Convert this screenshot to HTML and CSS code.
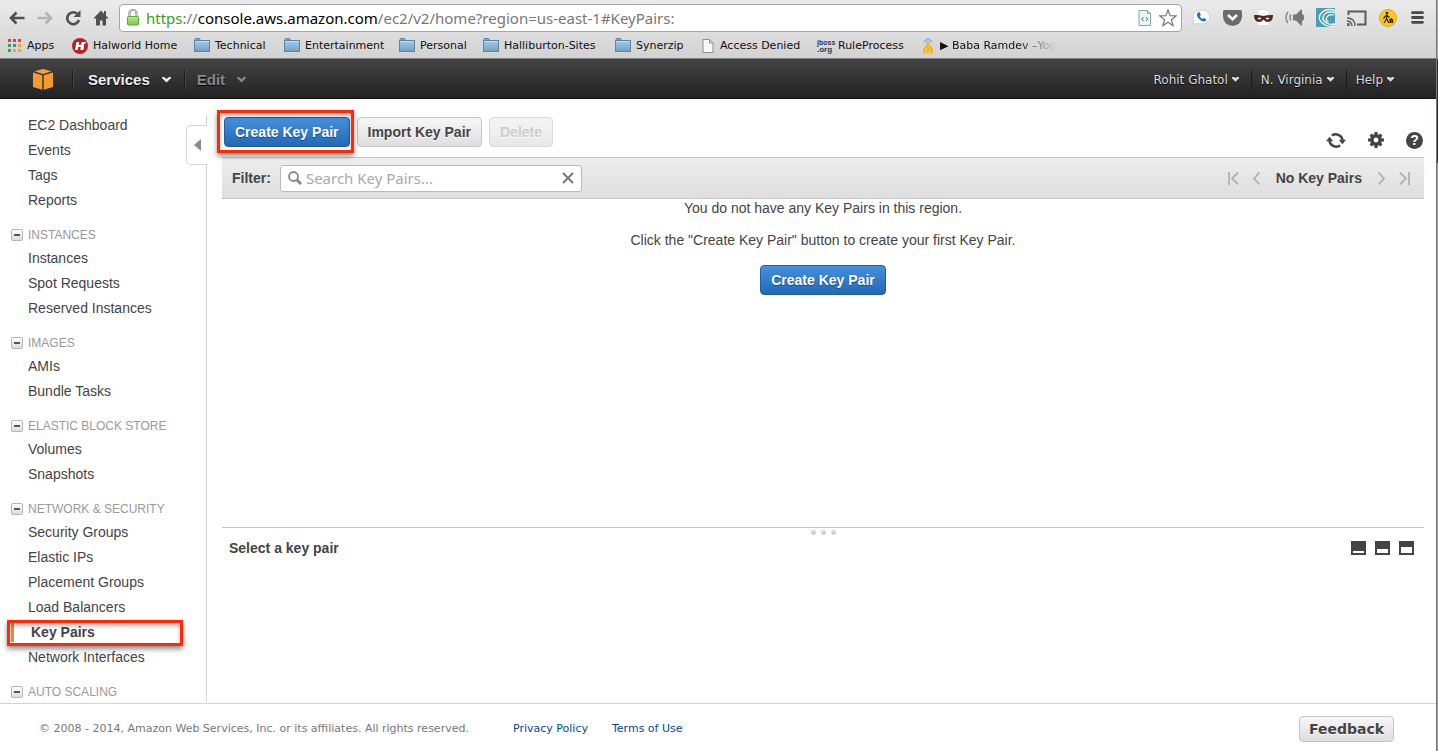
FILE: index.html
```html
<!DOCTYPE html>
<html lang="en">
<head>
<meta charset="utf-8">
<title>EC2 Management Console</title>
<link rel="stylesheet" href="styles.css">
</head>
<body>
<svg class="defs" aria-hidden="true">
  <defs>
    <linearGradient id="g-folder" x1="0" y1="0" x2="0" y2="1"><stop offset="0" stop-color="#a9cbe4"/><stop offset="1" stop-color="#6f9fc6"/></linearGradient>
    <linearGradient id="g-lock" x1="0" y1="0" x2="0" y2="1"><stop offset="0" stop-color="#b5ea8b"/><stop offset="1" stop-color="#7cc749"/></linearGradient>
    <symbol id="folder" viewBox="0 0 16 15"><path d="M1 2.500v-1q0-1 1-1h3q1 0 1 1v1" fill="#7fa8c9" stroke="#5b84a6"/><rect x=".5" y="2.500" width="15" height="11" fill="url(#g-folder)" stroke="#5b84a6"/><path d="M1 3.500h14" stroke="#c5dced"/></symbol>
    <symbol id="caret" viewBox="0 0 9 6"><path d="M0 0h2l2.500 2L7 0h2v1L4.500 5.500 0 1z" fill="currentColor"/></symbol>
    <symbol id="caret-s" viewBox="0 0 7 5"><path d="M0 0h2l1.500 1L5 0h2v1.200L3.500 4.800 0 1.200z" fill="currentColor"/></symbol>
  </defs>
</svg>
<div class="desktop">
<div class="window">
  <header class="chrome">
    <div class="toolbar">
      <div class="history">
        <button class="tool" aria-label="Back"><svg width="16" height="14" viewBox="0 0 16 14"><path d="M7.500 1.500L2 7l5.500 5.500M2 7h13.500" fill="none" stroke="#505050" stroke-width="2.600"/></svg></button>
        <button class="tool" aria-label="Forward"><svg width="16" height="14" viewBox="0 0 16 14"><path d="M8.500 1.500L14 7l-5.500 5.500M14 7H.5" fill="none" stroke="#b3b3b3" stroke-width="2.600"/></svg></button>
        <button class="tool" aria-label="Reload"><svg width="16" height="16" viewBox="0 0 16 16"><path d="M13 4.500A6 6 0 1 0 14 10" fill="none" stroke="#505050" stroke-width="2.600"/><path d="M15.500 0v7H8.500z" fill="#505050"/></svg></button>
        <button class="tool" aria-label="Home"><svg width="16" height="16" viewBox="0 0 16 16"><path d="M8 .5L.8 8l1 1L3 8v7.500h4V10.500h2.500v5H13V8l1.200 1 1-1L13 5.800V1h-2v2.700z" fill="#505050"/></svg></button>
      </div>
      <div class="address">
        <svg width="12" height="17" viewBox="0 0 12 17"><path d="M2.500 9V4.500a3.500 3.500 0 0 1 7 0V9" fill="none" stroke="#8b8b8b" stroke-width="2.200"/><path d="M2.500 9V4.500a3.500 3.500 0 0 1 7 0V9" fill="none" stroke="#ddd" stroke-width=".8"/><rect x=".5" y="7.500" width="11" height="8.500" rx="1" fill="url(#g-lock)" stroke="#5da534"/></svg>
        <div class="url"><span class="scheme">https</span>://<span class="host">console.aws.amazon.com</span>/ec2/v2/home?region=us-east-1#KeyPairs:</div>
        <svg width="14" height="16" viewBox="0 0 14 16"><path d="M1 .5h8.500L12.500 3.500v12H1z" fill="#eef5f6" stroke="#8aa5ab"/><path d="M9.500.5v3h3" fill="none" stroke="#8aa5ab"/><path d="M5.500 7L3.800 9l1.700 2M8 7l1.700 2L8 11" fill="none" stroke="#4f6b72"/></svg>
        <button class="tool" aria-label="Bookmark this page"><svg width="18" height="18" viewBox="0 0 18 18"><path d="M9 1l2.200 5.600 6 .3-4.700 3.800 1.600 5.900L9 13.300l-5.100 3.300 1.600-5.900L.8 6.900l6-.3z" fill="#fff" stroke="#777" stroke-width="1.200"/></svg></button>
      </div>
      <div class="extensions">
        <button class="tool" aria-label="Phone"><svg width="19" height="18" viewBox="0 0 19 18"><path d="M9.500 1c5 0 8.500 3 8.500 7s-3.500 7-8.500 7c-1.500 0-2.600-.2-3.600-.6L1 15.500l1-4C1 10.500 1 9 1 8c0-4 3.500-7 8.500-7z" fill="#fff" stroke="#ccc"/><path d="M6 3.500c-2 1.500-1 4.500 1.500 6.800s5.500 3 6.500 1.200l.3-1-2.600-1.600-1.400 1.200Q8 8.700 7.600 7l1.300-1L7.500 3z" fill="#1a6fe0"/></svg></button>
        <button class="tool" aria-label="Pocket"><svg width="19" height="16" viewBox="0 0 19 16"><path d="M1.500 0h16Q19 0 19 1.500V6.500a9.500 9.500 0 0 1-19 0v-5Q0 0 1.500 0z" fill="#6b6b6b"/><path d="M5 5l4.500 4.300L14 5" fill="none" stroke="#fff" stroke-width="2.600"/></svg></button>
        <button class="tool" aria-label="Mask"><svg width="19" height="17" viewBox="0 0 19 17"><path d="M3.500.5h8.500l3 3v13H3.500z" fill="#fff" stroke="#ddd"/><path d="M0 6q4.500-.5 9.500 1Q14.500 5.500 19 6q0 7-5 7-3 0-4.500-2.500Q8 13 5 13 0 13 0 6z" fill="#582524"/><path d="M3.500 9.500q2-2 4 0-2 2-4 0zM11.500 9.500q2-2 4 0-2 2-4 0z" fill="#fff"/></svg></button>
        <button class="tool" aria-label="Sound"><svg width="19" height="17" viewBox="0 0 19 17"><path d="M8 5.500h3l5-5h1V5q2 0 2 3.500T17 12v4.500h-1l-5-5H8z" fill="#777"/><path d="M6 5.500q-2 3 0 6M2.800 3q-3.600 5.500 0 11" fill="none" stroke="#888" stroke-width="1.500"/></svg></button>
        <button class="tool" aria-label="Swirl"><svg width="19" height="19" viewBox="0 0 19 19"><path d="M0 0h19v19H0z" fill="#4a9fb0"/><path d="M19 2.500Q10-.5 5 5.500T9 17q4 2 10 1M19 4.500Q11 2.500 8 7t2.500 8q3 2 8.500 1M18 7q-5-1.500-7 2t1.500 5" fill="none" stroke="#fff" stroke-width="1.300"/></svg></button>
        <button class="tool" aria-label="Cast"><svg width="20" height="16" viewBox="0 0 20 16"><path d="M1.500 5V1.500h17v13H10" fill="none" stroke="#5b5b5b" stroke-width="2"/><path d="M0 14h2v2H0zM0 11q4.500 0 5 5M0 8q8 0 8 8" fill="none" stroke="#5b5b5b" stroke-width="1.400"/></svg></button>
        <button class="tool" aria-label="Walker"><svg width="18" height="18" viewBox="0 0 18 18"><circle cx="9" cy="9" r="8.500" fill="#fbc71b" stroke="#e3a70f"/><circle cx="8" cy="4" r="1.300" fill="#332a12"/><path d="M8 5.500L7.500 10 5 14M7.700 9.500l2 4.500M4.500 9.500L7.500 6l3 2.500M12 9v5M11 14v-3.500h2.500V14" fill="none" stroke="#332a12" stroke-width="1.200"/></svg></button>
        <button class="tool more" aria-label="Menu"><svg width="13" height="13" viewBox="0 0 13 13"><path d="M1.500 1.700h10M1.500 6.500h10M1.500 11.300h10" stroke="#484848" stroke-width="2.800" stroke-linecap="round"/></svg></button>
      </div>
    </div>
    <nav class="bookmarks" aria-label="Bookmarks">
      <a href="#apps"><svg width="15" height="14" viewBox="0 0 15 14"><path d="M1 0h3v3H1zM6 0h3v3H6zM11 0h3v3h-3z" fill="#dd4336"/><path d="M1 5h3v3H1zM1 10h3v3H1z" fill="#3f9c50"/><path d="M6 5h3v3H6z" fill="#3c7ee8"/><path d="M11 5h3v3h-3zM6 10h3v3H6zM11 10h3v3h-3z" fill="#f0a92e"/></svg><span>Apps</span></a>
      <a href="#halworld"><svg width="16" height="16" viewBox="0 0 16 16"><circle cx="8" cy="8" r="8" fill="#b02526"/><path d="M4.500 4H7.200L6.700 6.700H9.300L9.800 4h4.200l-.3 1.500h-1.500L11.500 12H8.300l.5-3H6.200l-.5 3H3z" fill="#fff"/></svg><span>Halworld Home</span></a>
      <a href="#technical"><svg width="16" height="15"><use href="#folder"/></svg><span>Technical</span></a>
      <a href="#entertainment"><svg width="16" height="15"><use href="#folder"/></svg><span>Entertainment</span></a>
      <a href="#personal"><svg width="16" height="15"><use href="#folder"/></svg><span>Personal</span></a>
      <a href="#sites"><svg width="16" height="15"><use href="#folder"/></svg><span>Halliburton-Sites</span></a>
      <a href="#synerzip"><svg width="16" height="15"><use href="#folder"/></svg><span>Synerzip</span></a>
      <a href="#denied"><svg width="13" height="14" viewBox="0 0 13 14"><path d="M1 .5h6.500L11 4v9.500H1z" fill="#fafafa" stroke="#8d8d8d"/><path d="M7.500.5V4H11" fill="none" stroke="#8d8d8d"/></svg><span>Access Denied</span></a>
      <a href="#rule"><span class="jboss"><b>jboss</b><b>.org</b></span><span>RuleProcess</span></a>
      <a href="#baba" class="faded"><svg width="14" height="16" viewBox="0 0 14 16"><path d="M7 4l2.500 3.500L12 11v4.500H2V11l2.500-3.500z" fill="#efb62a"/><path d="M5 15v-4.500M8.500 15V8" stroke="#fbdc66"/><path d="M2.500 4L7 .5 11.500 4M4.500 5L7 3l2.500 2" fill="none" stroke="#5aa5dc"/></svg><span>▶ Baba Ramdev –Yog</span></a>
    </nav>
  </header>

  <nav class="console-nav" aria-label="Console">
    <a href="#home" class="logo" aria-label="AWS home"><svg width="20" height="21" viewBox="0 0 20 21"><path d="M10 0l8.500 2.300L10 5 1.500 2.300z" fill="#f6a136"/><path d="M0 3.500l9.300 2.800v14.500L0 18zM20 3.500l-9.300 2.800v14.500L20 18z" fill="#f39b2d"/></svg></a>
    <button class="menu">Services<svg width="9" height="6"><use href="#caret"/></svg></button>
    <button class="menu dim">Edit<svg width="9" height="6"><use href="#caret"/></svg></button>
    <div class="account">
      <button class="menu-s">Rohit Ghatol<svg width="7" height="5"><use href="#caret-s"/></svg></button>
      <button class="menu-s">N. Virginia<svg width="7" height="5"><use href="#caret-s"/></svg></button>
      <button class="menu-s">Help<svg width="7" height="5"><use href="#caret-s"/></svg></button>
    </div>
  </nav>

  <div class="workspace">
    <aside class="sidebar">
      <ul>
        <li><a href="#dash">EC2 Dashboard</a></li>
        <li><a href="#events">Events</a></li>
        <li><a href="#tags">Tags</a></li>
        <li><a href="#reports">Reports</a></li>
      </ul>
      <h2><button aria-label="Collapse Instances"></button>INSTANCES</h2>
      <ul>
        <li><a href="#instances">Instances</a></li>
        <li><a href="#spot">Spot Requests</a></li>
        <li><a href="#reserved">Reserved Instances</a></li>
      </ul>
      <h2><button aria-label="Collapse Images"></button>IMAGES</h2>
      <ul>
        <li><a href="#amis">AMIs</a></li>
        <li><a href="#bundle">Bundle Tasks</a></li>
      </ul>
      <h2><button aria-label="Collapse Elastic Block Store"></button>ELASTIC BLOCK STORE</h2>
      <ul>
        <li><a href="#volumes">Volumes</a></li>
        <li><a href="#snapshots">Snapshots</a></li>
      </ul>
      <h2><button aria-label="Collapse Network and Security"></button>NETWORK &amp; SECURITY</h2>
      <ul>
        <li><a href="#groups">Security Groups</a></li>
        <li><a href="#ips">Elastic IPs</a></li>
        <li><a href="#placement">Placement Groups</a></li>
        <li><a href="#balancers">Load Balancers</a></li>
        <li class="current"><a href="#KeyPairs">Key Pairs</a></li>
        <li><a href="#interfaces">Network Interfaces</a></li>
      </ul>
      <h2><button aria-label="Collapse Auto Scaling"></button>AUTO SCALING</h2>
      <button class="collapse" aria-label="Hide sidebar"><svg width="7" height="12" viewBox="0 0 7 12"><path d="M7 0v12L0 6z" fill="#8c8c8c"/></svg></button>
    </aside>

    <main class="content">
      <div class="actions">
        <span class="highlight"><button class="btn primary">Create Key Pair</button></span>
        <button class="btn">Import Key Pair</button>
        <button class="btn" disabled>Delete</button>
        <div class="icons">
          <button class="tool" aria-label="Refresh"><svg width="20" height="17" viewBox="0 0 20 17"><path d="M5.800 3.500A7 7 0 0 1 16.600 8M14.200 13.500A7 7 0 0 1 3.400 9" fill="none" stroke="#444" stroke-width="2.400"/><path d="M12.800 7.800H20l-3.600 4.400zM0 9.200h7.200L3.600 4.800z" fill="#444"/></svg></button>
          <button class="tool" aria-label="Settings"><svg width="16" height="16" viewBox="0 0 16 16"><path d="M8 0v16M0 8h16M2.600 2.600l10.800 10.800M13.400 2.600L2.600 13.400" stroke="#444" stroke-width="3.200"/><circle cx="8" cy="8" r="4.200" fill="#fff" stroke="#444" stroke-width="3.600"/></svg></button>
          <button class="tool help" aria-label="Help">?</button>
        </div>
      </div>

      <div class="filter-bar">
        <label for="filter">Filter:</label>
        <div class="search">
          <svg width="14" height="14" viewBox="0 0 14 14"><circle cx="5.500" cy="5.500" r="4.500" fill="none" stroke="#888" stroke-width="1.800"/><path d="M9 9l4 4" stroke="#888" stroke-width="3"/></svg>
          <input id="filter" type="text" placeholder="Search Key Pairs...">
          <button class="tool" aria-label="Clear"><svg width="12" height="12" viewBox="0 0 12 12"><path d="M1 1l10 10M11 1L1 11" stroke="#777" stroke-width="2"/></svg></button>
        </div>
        <div class="pager">
          <button class="tool" aria-label="First"><svg width="11" height="13" viewBox="0 0 11 13"><path d="M1 0v13M10 .5l-6 6 6 6" fill="none" stroke="#b0b0b0" stroke-width="1.800"/></svg></button>
          <button class="tool" aria-label="Previous"><svg width="7" height="13" viewBox="0 0 7 13"><path d="M6.500.5l-5.500 6 5.500 6" fill="none" stroke="#b0b0b0" stroke-width="1.800"/></svg></button>
          <strong>No Key Pairs</strong>
          <button class="tool" aria-label="Next"><svg width="7" height="13" viewBox="0 0 7 13"><path d="M.5.500l5.500 6-5.500 6" fill="none" stroke="#b0b0b0" stroke-width="1.800"/></svg></button>
          <button class="tool" aria-label="Last"><svg width="11" height="13" viewBox="0 0 11 13"><path d="M10 0v13M1 .5l6 6-6 6" fill="none" stroke="#b0b0b0" stroke-width="1.800"/></svg></button>
        </div>
      </div>

      <section class="empty">
        <p>You do not have any Key Pairs in this region.</p>
        <p>Click the "Create Key Pair" button to create your first Key Pair.</p>
        <button class="btn primary">Create Key Pair</button>
      </section>

      <section class="details">
        <div class="grip"><i></i><i></i><i></i></div>
        <div class="details-head">
          <h3>Select a key pair</h3>
          <button class="tool" aria-label="Small pane"><svg width="15" height="14" viewBox="0 0 15 14"><path d="M0 0h15v14H0z" fill="#444"/><path d="M2 10h11v2H2z" fill="#fff"/></svg></button>
          <button class="tool" aria-label="Medium pane"><svg width="15" height="14" viewBox="0 0 15 14"><path d="M0 0h15v14H0z" fill="#444"/><path d="M2 8h11v4H2z" fill="#fff"/></svg></button>
          <button class="tool" aria-label="Large pane"><svg width="15" height="14" viewBox="0 0 15 14"><path d="M0 0h15v14H0z" fill="#444"/><path d="M2 6h11v6H2z" fill="#fff"/></svg></button>
        </div>
      </section>
    </main>
  </div>

  <footer class="footer">
    <span class="copyright">© 2008 - 2014, Amazon Web Services, Inc. or its affiliates. All rights reserved.</span>
    <a href="#privacy">Privacy Policy</a>
    <a href="#terms">Terms of Use</a>
    <button class="btn feedback">Feedback</button>
  </footer>
</div>
<div class="edge"></div>
</div>
</body>
</html>
```
FILE: styles.css
```css
* { box-sizing: border-box; }

body {
  margin: 0;
  color: #444;
  font: 14px/20px "Liberation Sans", Arial, sans-serif;
}

button { font: inherit; color: inherit; }
a { color: inherit; text-decoration: none; }
svg { display: block; flex: none; }
.defs { position: absolute; width: 0; height: 0; }

.desktop { display: flex; height: 100vh; overflow: hidden; }
.window { flex: 1; min-width: 0; display: flex; flex-direction: column; background: #fff; }
.edge { width: 2px; background: linear-gradient(#aaa 59px, #0f3540 59px, #0f3540 163px, #999 163px); border-left: 1px solid #777; }

.tool { display: grid; place-items: center; padding: 0; border: 0; background: none; }

/* Browser chrome */
.chrome {
  background: linear-gradient(#ebebeb, #d2d2d2);
  border-bottom: 1px solid #808080;
  height: 59px;
}
.toolbar { display: flex; align-items: center; height: 35px; }
.history { display: flex; gap: 12px; width: 119px; padding-left: 9px; }
.address {
  flex: 1;
  display: flex;
  align-items: center;
  gap: 7px;
  height: 28px;
  padding: 0 4px 0 7px;
  background: #fff;
  border: 1px solid #a5a5a5;
  border-radius: 4px;
}
.url { flex: 1; color: #777; font: 15px/20px "Noto Sans", sans-serif; white-space: nowrap; }
.scheme { color: #3aa017; }
.host { color: #000; }
.extensions { display: flex; gap: 12px; padding: 0 11px 0 10px; }
.more { width: 16px; }

.bookmarks {
  display: grid;
  grid-template-columns: 65px 122px 90px 115px 84px 132px 87px 115px 104px 150px;
  height: 21px;
  padding-left: 7px;
  color: #111;
  font: 11px/21px "DejaVu Sans", sans-serif;
}
.bookmarks a { display: flex; align-items: center; gap: 5px; white-space: nowrap; }
.jboss { display: flex; flex-direction: column; width: 16px; font: bold 7px/7px "Liberation Sans", sans-serif; color: #2b3a50; }
.jboss b + b { font-size: 8px; }
.faded span { -webkit-mask-image: linear-gradient(90deg, #000 66%, transparent 100%); mask-image: linear-gradient(90deg, #000 66%, transparent 100%); }

/* Console navigation */
.console-nav {
  display: flex;
  align-items: center;
  height: 40px;
  padding: 2px 34px 0 33px;
  background: linear-gradient(#444, #222);
  border-bottom: 1px solid #111;
}
.logo { padding-right: 19px; }
.menu, .menu-s {
  display: flex;
  align-items: center;
  height: 20px;
  padding: 0;
  border: 0;
  background: none;
  text-shadow: 0 1px 1px #000;
}
.menu {
  gap: 12px;
  padding: 0 13px 0 15px;
  border-left: 1px solid #1a1a1a;
  box-shadow: inset 1px 0 #4a4a4a;
  font-weight: bold;
  font-size: 15px;
  color: #eee;
}
.menu.dim { color: #888; padding-left: 12px; }
.account { display: flex; margin-left: auto; }
.menu-s { gap: 4px; padding: 0 8px 0 9px; font: 12px/20px "DejaVu Sans", sans-serif; color: #ddd; }
.menu-s + .menu-s { border-left: 1px solid #1a1a1a; margin-left: 4px; }

/* Workspace */
.workspace { flex: 1; min-height: 0; display: flex; }
.sidebar { position: relative; width: 207px; height: 100%; padding-top: 14px; }
.sidebar::after {
  content: "";
  position: absolute;
  top: 16px;
  right: 0;
  bottom: 1px;
  border-right: 1px solid #d5d5d5;
}
.sidebar ul { margin: 0; padding: 0; list-style: none; }
.sidebar li { position: relative; padding-left: 28px; line-height: 25px; }
.sidebar h2 {
  display: flex;
  align-items: center;
  gap: 5px;
  height: 33px;
  margin: 0;
  padding: 10px 0 0 11px;
  font-size: 12px;
  font-weight: normal;
  color: #999;
}
.sidebar h2 button {
  display: grid;
  place-items: center;
  width: 12px;
  height: 12px;
  padding: 0;
  border: 1px solid #b5b5b5;
  border-radius: 2px;
  background: linear-gradient(#fff, #ddd);
}
.sidebar h2 button::before { content: ""; width: 6px; height: 2px; background: #555; }
.sidebar .current { padding-left: 31px; font-weight: bold; }
.current::before {
  content: "";
  position: absolute;
  left: 11px;
  top: 3px;
  width: 3px;
  height: 19px;
  background: #e8952d;
}
.current::after, .highlight::after {
  content: "";
  position: absolute;
  border: 3px solid #fc2a05;
  box-shadow: 0 3px 5px rgba(0, 0, 0, .45), inset 0 3px 4px rgba(0, 0, 0, .3);
  pointer-events: none;
}
.current::after { left: 7px; right: 24px; top: 0; bottom: -1px; }
.collapse {
  position: absolute;
  z-index: 1;
  top: 26px;
  right: 0;
  display: grid;
  place-items: center;
  width: 21px;
  height: 40px;
  padding: 0;
  border: 1px solid #d5d5d5;
  border-right: 0;
  border-radius: 5px 0 0 5px;
  background: #fff;
}

.content { flex: 1; min-width: 0; display: flex; flex-direction: column; padding: 0 12px 0 15px; }
.actions { display: flex; align-items: flex-start; gap: 7px; height: 58px; padding: 18px 0 0 2px; }
.highlight { position: relative; }
.highlight::after { inset: -7px -4px -6px -7px; }
.btn {
  height: 30px;
  padding: 0 10px;
  border: 1px solid #c5c5c5;
  border-radius: 4px;
  background: linear-gradient(#f7f7f7, #dedede);
  font-weight: bold;
  font-size: 14px;
  text-shadow: 0 1px #fff;
  white-space: nowrap;
}
.btn.primary {
  color: #fff;
  border-color: #1f5f9f;
  background: linear-gradient(#4590de, #2269b5);
  text-shadow: 0 1px 1px #174a80;
}
.btn:disabled { color: #ccc; border-color: #d9d9d9; background: linear-gradient(#f5f5f5, #e8e8e8); }
.icons { display: flex; align-items: center; gap: 22px; height: 18px; margin: 14px 1px 0 auto; }
.help {
  width: 17px;
  height: 17px;
  border-radius: 9px;
  background: #444;
  color: #fff;
  font: bold 14px/17px "Liberation Sans", sans-serif;
}

.filter-bar {
  display: flex;
  align-items: center;
  gap: 9px;
  height: 42px;
  padding: 0 14px 0 10px;
  border: solid #c5c5c5;
  border-width: 1px 0;
  background: linear-gradient(#eee, #dedede);
}
.filter-bar label { font-weight: bold; }
.search {
  display: flex;
  align-items: center;
  gap: 4px;
  width: 302px;
  height: 27px;
  padding: 0 7px;
  border: 1px solid #bbb;
  border-radius: 3px;
  background: #fff;
}
.search input {
  flex: 1;
  min-width: 0;
  padding: 0;
  border: 0;
  outline: 0;
  background: none;
  font: 15px/20px "Noto Sans", sans-serif;
}
.search input::placeholder { color: #aaa; }
.pager { display: flex; align-items: center; gap: 14px; margin-left: auto; }
.pager strong { margin: 0 2px; }

.empty { flex: 1; text-align: center; }
.empty p { margin: 0 0 14px; line-height: 18px; }
.empty .btn { margin-top: 2px; }

.details { height: 176px; border-top: 1px solid #c5c5c5; }
.grip { display: flex; justify-content: center; gap: 5px; padding-top: 2px; }
.grip i { width: 5px; height: 5px; border-radius: 50%; background: linear-gradient(#eee, #bbb); border: 1px solid #ccc; }
.details-head { display: flex; align-items: center; gap: 9px; padding: 3px 10px 0 7px; }
.details-head h3 { flex: 1; margin: 0; font-size: 14px; }

.footer {
  display: flex;
  align-items: center;
  gap: 24px;
  height: 48px;
  padding: 3px 42px 0 39px;
  border-top: 1px solid #d5d5d5;
  color: #777;
  font: 11px/16px "DejaVu Sans", sans-serif;
}
.copyright { min-width: 450px; }
.footer a { color: #004b91; }
.feedback { height: 26px; padding: 0 9px; margin-left: auto; font-family: "DejaVu Sans", sans-serif; color: #444; }
```
